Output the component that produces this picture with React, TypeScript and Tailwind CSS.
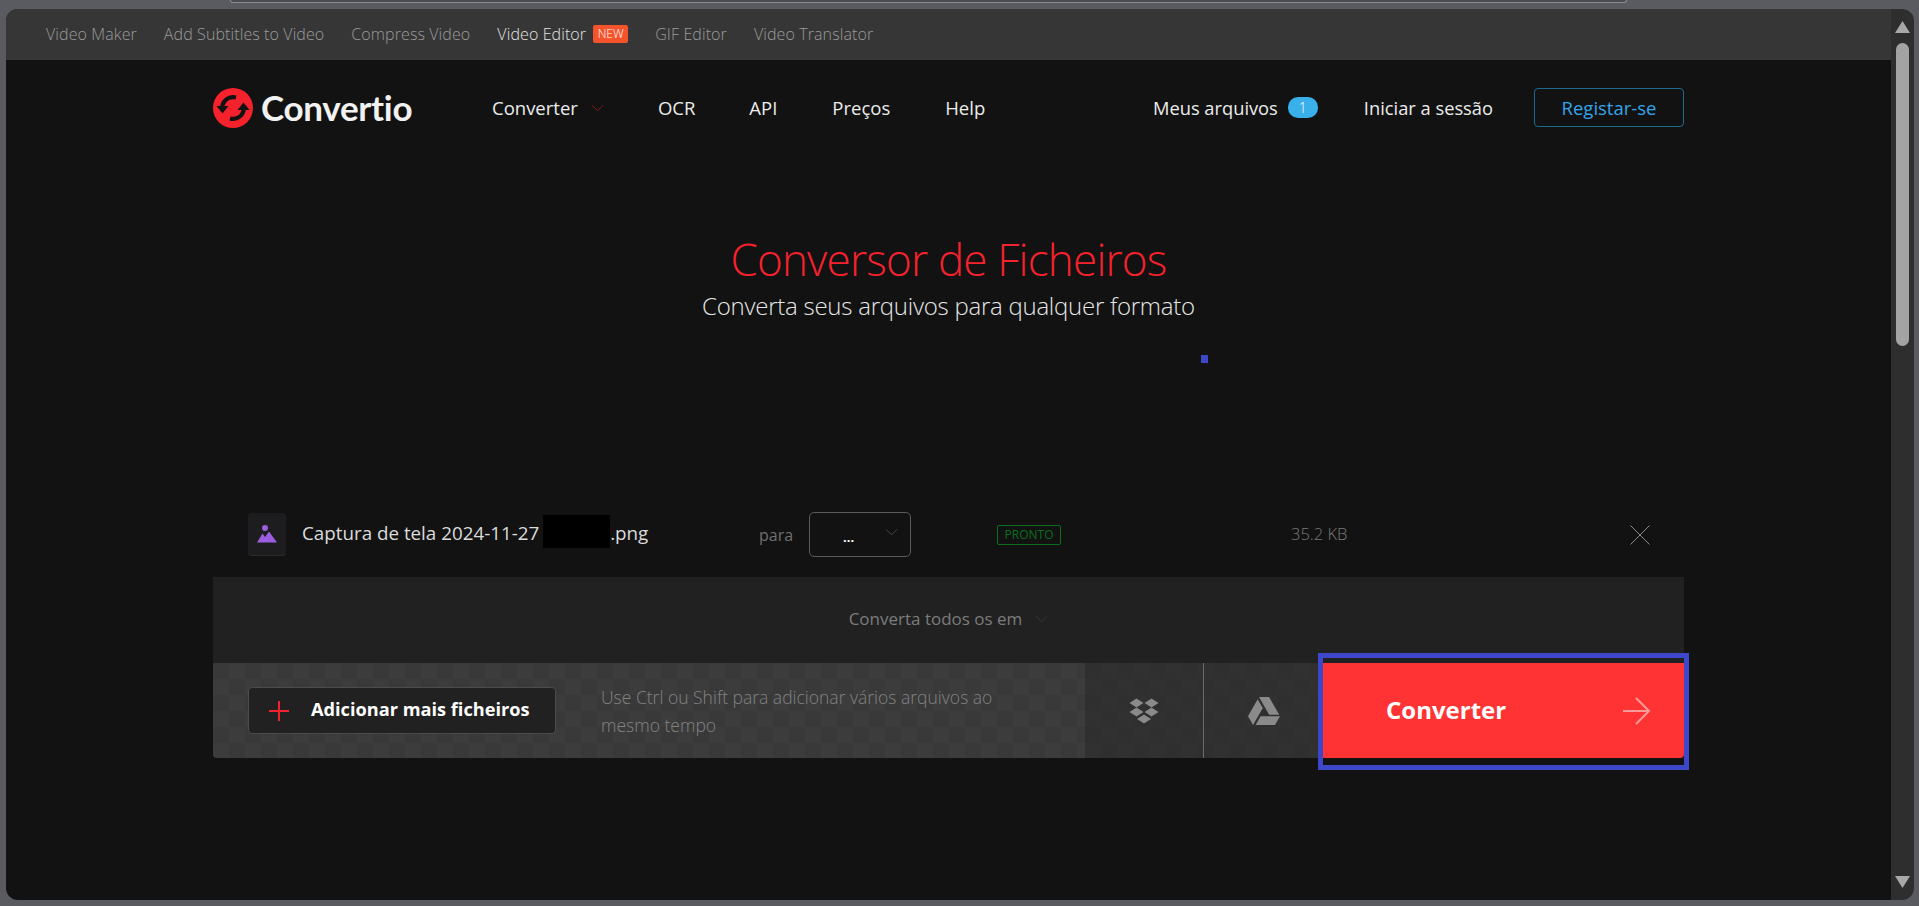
import React from "react";
import { FaGoogleDrive } from "react-icons/fa";

const sans = "font-['Open_Sans',sans-serif]";

function Chevron({ className }: { className: string }) {
  return (
    <svg viewBox="0 0 14 8" className={className} fill="none" stroke="currentColor" strokeWidth="1">
      <path d="M1 1l6 6 6-6" />
    </svg>
  );
}

function Logo() {
  return (
    <svg viewBox="0 0 40 40" className="w-10 h-10 shrink-0">
      <circle cx="20" cy="20" r="20" fill="#f5222d" />
      <path d="M23 9.5 A11 11 0 0 0 9.5 17 V21" fill="none" stroke="#121212" strokeWidth="4.2" />
      <path d="M3.5 18 H15.5 L9.5 25.5 Z" fill="#121212" />
      <path d="M17 30.5 A11 11 0 0 0 30.5 23 V19" fill="none" stroke="#121212" strokeWidth="4.2" />
      <path d="M24.5 22 H36.5 L30.5 14.5 Z" fill="#121212" />
    </svg>
  );
}

function Dropbox() {
  const d = (x: number, y: number) => `${x - 7},${y} ${x},${y - 4.6} ${x + 7},${y} ${x},${y + 4.6}`;
  return (
    <svg viewBox="0 0 30 26" className="w-[30px] h-[26px]" fill="#8a8a8a">
      <polygon points={d(7.5, 5)} />
      <polygon points={d(22.5, 5)} />
      <polygon points={d(7.5, 14)} />
      <polygon points={d(22.5, 14)} />
      <polygon points={d(15, 21)} />
    </svg>
  );
}

export default function App() {
  const topLinks = ["Video Maker", "Add Subtitles to Video", "Compress Video"];
  return (
    <div className={`h-screen w-full overflow-hidden bg-[#5a5b61] flex flex-col ${sans}`}>
      <div className="h-[9px] shrink-0">
        <div className="ml-[230px] w-[1397px] h-[3px] rounded-b-lg border-b border-x border-[#8a8b90] bg-[#4b4c52]" />
      </div>
      <div className="flex-1 min-h-0 ml-[6px] mr-[5px] mb-[6px] flex rounded-t-[12px] rounded-b-[12px] overflow-hidden">
        <main className="flex-1 min-w-0 bg-[#121212] flex flex-col">
          <nav className="h-[51px] shrink-0 bg-[#363636] flex items-center pl-[40px] pb-[1px] text-[16px] tracking-[0.1px] text-[#9b9b9b] font-light">
            {topLinks.map((t) => (
              <span key={t} className="mr-[27px]">{t}</span>
            ))}
            <span className="text-[#e2e2e2]">Video Editor</span>
            <span className="ml-[7px] mr-[27px] w-[35px] h-[18px] rounded-[2px] bg-[#f4532b] text-white text-[12px] tracking-normal flex items-center justify-center">NEW</span>
            <span className="mr-[27px]">GIF Editor</span>
            <span>Video Translator</span>
          </nav>

          <div className="w-[1471px] mx-auto relative flex-1 min-h-0">
            <header className="mt-[28px] h-[39px] flex items-center text-[#ececec] text-[18.5px]">
              <Logo />
              <span className="ml-[8px] w-[152px] font-['Lato',sans-serif] font-bold text-[35px] tracking-[-0.3px] text-[#f2f2f2] leading-none">Convertio</span>
              <span className="ml-[79px]">Converter</span>
              <Chevron className="ml-[13px] w-[13px] h-[8px] text-[#8f1d22]" />
              <span className="ml-[54px]">OCR</span>
              <span className="ml-[54px]">API</span>
              <span className="ml-[55px]">Preços</span>
              <span className="ml-[55px]">Help</span>
              <span className="ml-auto text-[18.3px]">Meus arquivos</span>
              <span className="ml-[10px] w-[30px] h-[21px] rounded-[10px] bg-[#39b0ea] text-white text-[14px] font-light flex items-center justify-center">1</span>
              <span className="ml-[46px] text-[18.3px]">Iniciar a sessão</span>
              <span className="ml-[41px] w-[150px] h-[39px] rounded-[4px] border border-[#1f6a8c] text-[#35a5ea] flex items-center justify-center">Registar-se</span>
            </header>

            <h1 className="mt-[102px] text-center text-[44px] leading-[60px] tracking-[-0.8px] font-[350] text-[#f5222d]">Conversor de Ficheiros</h1>
            <p className="mt-[1px] text-center text-[24px] leading-[32px] tracking-[-0.25px] font-light text-[#e6e6e6]">Converta seus arquivos para qualquer formato</p>

            <span className="absolute left-[988px] top-[295px] w-[7px] h-[8px] bg-[#3e47c9]" />

            <div className="mt-[170px] flex items-center h-[85px] pl-[35px] pr-[34px]">
              <div className="w-[38px] h-[43px] rounded-[4px] bg-[#1d1c1f] border-b border-[#2c2c2c] flex items-center justify-center">
                <svg viewBox="0 0 20 20" className="w-5 h-5" fill="#9a5fe0">
                  <circle cx="8" cy="4" r="3" />
                  <path d="M0 18.5 L5.5 9.5 L8 13 L12 7.5 L20 18.5 Z" />
                </svg>
              </div>
              <div className="ml-[16px] w-[457px] flex items-center text-[18.8px] text-[#dcdcdc]">
                <span className="-translate-y-[1px]">Captura de tela 2024-11-27</span>
                <span className="ml-[4px] w-[67px] h-[33px] -translate-y-[3px] bg-black" />
                <span className="-translate-y-[1px]">.png</span>
              </div>
              <span className="w-[50px] text-[16px] text-[#707070]">para</span>
              <div className="w-[102px] h-[45px] rounded-[5px] border border-[#5a5a5a] flex items-center relative">
                <span className="ml-[33px] mt-[6px] text-[13px] font-bold text-white leading-none">...</span>
                <Chevron className="absolute right-[12px] top-[15px] w-[13px] h-[8px] text-[#4c4c4c]" />
              </div>
              <span className="ml-[86px] w-[64px] h-[20px] rounded-[2px] border border-[#0b6e1d] text-[#0b6e1d] text-[12px] flex items-center justify-center">PRONTO</span>
              <span className="ml-[230px] text-[16.5px] font-light text-[#7a7a7a]">35.2 KB</span>
              <svg viewBox="0 0 20 20" className="ml-auto w-5 h-5" fill="none" stroke="#8a8a8a" strokeWidth="1">
                <path d="M0.5 0.5l19 19M19.5 0.5l-19 19" />
              </svg>
            </div>

            <div className="h-[86px] pb-[2px] bg-[#212121] flex items-center justify-center text-[17px] text-[#7c7c7c]">
              <span>Converta todos os em</span>
              <Chevron className="ml-[13px] w-[13px] h-[8px] text-[#3a3a3a]" />
            </div>

            <div className="h-[95px] flex">
              <div className="flex-1 flex items-center rounded-bl-[4px] bg-[conic-gradient(#3c3c3c_25%,#393939_0_50%,#3c3c3c_0_75%,#393939_0)] bg-[length:32px_32px] pl-[35px]">
                <div className="w-[308px] h-[47px] rounded-[4px] bg-[#212121] border border-[#4c4c4c] flex items-center">
                  <svg viewBox="0 0 20 20" className="ml-[20px] w-5 h-5" stroke="#f5222d" strokeWidth="2">
                    <path d="M10 0v20M0 10h20" />
                  </svg>
                  <span className="ml-[22px] pb-[2px] text-[18.2px] font-bold text-white">Adicionar mais ficheiros</span>
                </div>
                <p className="ml-[45px] w-[410px] text-[17.5px] leading-[28px] font-light text-[#838383]">Use Ctrl ou Shift para adicionar vários arquivos ao mesmo tempo</p>
              </div>
              <div className="w-[238px] flex bg-[conic-gradient(#313131_25%,#2f2f2f_0_50%,#313131_0_75%,#2f2f2f_0)] bg-[length:32px_32px]">
                <div className="w-[119px] border-r border-[#6a6a6a] flex items-center justify-center"><Dropbox /></div>
                <div className="flex-1 flex items-center justify-center"><FaGoogleDrive className="w-[32px] h-[32px] text-[#8a8a8a]" /></div>
              </div>
              <div className="w-[361px] relative rounded-br-[4px] bg-[#ff3333] flex items-center pl-[63px] pr-[33px]">
                <span className="pb-[2px] text-[24px] font-bold text-white">Converter</span>
                <svg viewBox="0 0 28 28" className="ml-auto w-[28px] h-[28px]" fill="none" stroke="#ff9a9a" strokeWidth="2">
                  <path d="M0 14h26M13 1l13 13-13 13" />
                </svg>
                <span className="absolute left-[-5px] right-[-5px] top-[-10px] bottom-[-12px] border-[5px] border-[#3e47c9]" />
              </div>
            </div>
          </div>
        </main>

        <aside className="w-[23px] shrink-0 bg-[#2e2e2e] flex flex-col items-center relative">
          <svg viewBox="0 0 15 12" className="mt-[12px] w-[15px] h-[12px]" fill="#a8a8a8"><path d="M7.5 0L15 12H0z" /></svg>
          <div className="mt-[10px] w-[13px] h-[303px] rounded-full bg-[#a3a3a3]" />
          <svg viewBox="0 0 15 12" className="mt-auto mb-[12px] w-[15px] h-[12px]" fill="#a8a8a8"><path d="M7.5 12L15 0H0z" /></svg>
        </aside>
      </div>
    </div>
  );
}
